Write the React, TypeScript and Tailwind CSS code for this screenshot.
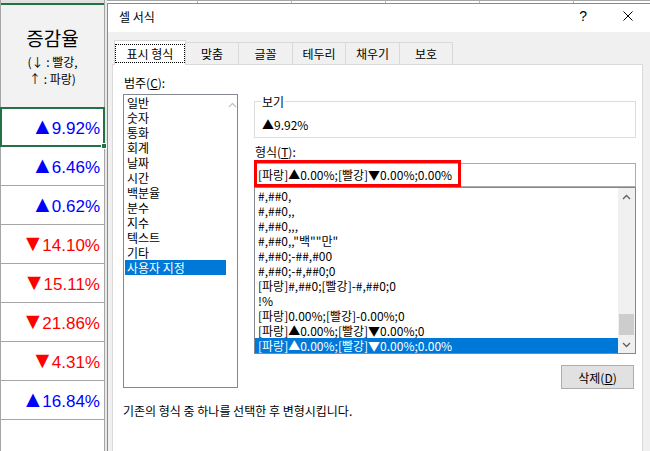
import React from 'react';

// 셀 값 (사용자 지정 서식 적용 결과)
const cells = [
  { n: '9.92%', up: true },
  { n: '6.46%', up: true },
  { n: '0.62%', up: true },
  { n: '14.10%', up: false },
  { n: '15.11%', up: false },
  { n: '21.86%', up: false },
  { n: '4.31%', up: false },
  { n: '16.84%', up: true },
];

const categories = ['일반', '숫자', '통화', '회계', '날짜', '시간', '백분율', '분수', '지수', '텍스트', '기타', '사용자 지정'];

const formats = [
  '#,##0,',
  '#,##0,,',
  '#,##0,,,',
  '#,##0,,"백""만"',
  '#,##0;-##,#00',
  '#,##0;-#,##0;0',
  '[파랑]#,##0;[빨강]-#,##0;0',
  '!%',
  '[파랑]0.00%;[빨강]-0.00%;0',
  '[파랑]▲0.00%;[빨강]▼0.00%;0',
  '[파랑]▲0.00%;[빨강]▼0.00%;0.00%',
];

const tabs = [
  { label: '맞춤', w: 'w-[54px]' },
  { label: '글꼴', w: 'w-[55px]' },
  { label: '테두리', w: 'w-[54px]' },
  { label: '채우기', w: 'w-[55px]' },
  { label: '보호', w: 'w-[54px]' },
];

function Chevron({ up, className }: { up?: boolean; className?: string }) {
  return (
    <svg width="9" height="6" viewBox="0 0 9 6" className={className}>
      <path d={up ? 'M1 5L4.5 1.5L8 5' : 'M1 1L4.5 4.5L8 1'} fill="none" stroke="currentColor" strokeWidth="1.3" />
    </svg>
  );
}

export default function App() {
  return (
    <div className="w-[650px] h-[451px] overflow-hidden flex bg-white text-black text-[12px] font-['Noto_Sans_CJK_KR',sans-serif]">
      {/* Sheet column behind the dialog */}
      <div className="w-[107px] shrink-0 flex">
        <div className="w-[105px] flex flex-col border-l border-r border-[#a6a6a6] bg-white">
          <div className="h-[3px] shrink-0 bg-[#e1e1e1]" />
          <div className="h-[2px] shrink-0 bg-[#217346]" />
          <div className="h-[103px] shrink-0 bg-[#f2f2f2] border-b border-[#a6a6a6] flex flex-col items-center pt-[21px]">
            <div className="text-[19px] leading-[24px]">증감율</div>
            <div className="mt-[4px] leading-[16.5px]">(↓ : 빨강,</div>
            <div className="leading-[16.5px]">↑ : 파랑)</div>
          </div>
          {cells.map((c, i) => (
            <div
              key={i}
              className="relative h-[39px] shrink-0 border-b border-[#a6a6a6] flex items-center justify-end pr-[4px] text-[17px] font-['Liberation_Sans',Arial,sans-serif]"
            >
              <span className={`leading-[20px] ${c.up ? 'text-[#0000ff]' : 'text-[#ff0000]'}`}>
                <span className="inline-block text-[23px] leading-none -mr-[2px]">{c.up ? '▲' : '▼'}</span>
                {c.n}
              </span>
              {i === 0 && (
                <div className="absolute -left-px -right-px -top-px -bottom-px border-2 border-[#217346]">
                  <div className="absolute -right-[4px] -bottom-[4px] w-[6px] h-[6px] bg-[#217346] border border-white" />
                </div>
              )}
            </div>
          ))}
        </div>
        <div className="w-[2px] bg-[#e8e8e8]" />
      </div>

      {/* Dialog */}
      <div className="flex-1 min-w-0 flex flex-col">
        <div className="h-[3px] shrink-0 flex border-t border-[#a6a6a6] bg-white">
          <div className="w-[91px] border-r border-[#bdbdbd]" />
          <div className="w-[94px] border-r border-[#bdbdbd]" />
          <div className="w-[94px] border-r border-[#bdbdbd]" />
          <div className="w-[94px] border-r border-[#bdbdbd]" />
          <div className="w-[94px] border-r border-[#bdbdbd]" />
        </div>
        <div className="flex-1 flex flex-col border-l border-t border-[#8c8c8c] bg-[#f0f0f0]">
          {/* Title bar */}
          <div className="h-[28px] shrink-0 bg-white flex items-center pl-[11px] pr-[17px] pb-[4px]">
            <span className="leading-[15px]">셀 서식</span>
            <span className="ml-auto mr-[36px] text-[14px] font-['Liberation_Sans',sans-serif]">?</span>
            <svg width="10" height="10" viewBox="0 0 10 10">
              <path d="M0.5 0.5L9.5 9.5M9.5 0.5L0.5 9.5" stroke="#000" strokeWidth="1" />
            </svg>
          </div>

          {/* Body */}
          <div className="flex-1 flex flex-col pl-[4px] pr-[7px] pt-[8px]">
            {/* Tabs */}
            <div className="h-[24px] shrink-0 flex items-end pl-[2px]">
              <div className="relative z-10 w-[72px] h-[25px] -mb-px bg-white border-x border-t border-[#d9d9d9] pt-[3px] pb-[2px] flex">
                <div className="flex-1 border border-dotted border-black flex items-center justify-center leading-[15px]">
                  표시 형식
                </div>
              </div>
              {tabs.map((t) => (
                <div
                  key={t.label}
                  className={`${t.w} h-[22px] -ml-px border-x border-t border-[#d9d9d9] flex items-center justify-center leading-[15px]`}
                >
                  {t.label}
                </div>
              ))}
            </div>

            {/* Tab panel */}
            <div className="h-[400px] shrink-0 bg-white border border-[#d9d9d9] pl-[10px] pt-[10px] flex flex-col">
              <div className="flex">
                {/* Category */}
                <div className="w-[115px] flex flex-col">
                  <div className="h-[15px] leading-[15px] pl-[1px]">
                    범주(<span className="underline">C</span>):
                  </div>
                  <div className="mt-[4px] h-[294px] border border-[#828790] bg-white flex">
                    <div className="w-[102px] pl-[1px]">
                      {categories.map((c, i) => (
                        <div
                          key={c}
                          className={`h-[15px] leading-[15px] pl-[2px] whitespace-nowrap ${
                            i === categories.length - 1 ? 'bg-[#0078d7] text-white' : ''
                          }`}
                        >
                          {c}
                        </div>
                      ))}
                    </div>
                    <div className="flex-1 flex justify-end pt-[7px] text-[#c4c4c4]">
                      <Chevron up />
                    </div>
                  </div>
                </div>

                {/* Right side */}
                <div className="ml-[16px] w-[382px] flex flex-col">
                  <fieldset className="mt-[19px] border border-[#dcdcdc] px-[6px] pt-[8px] pb-[5px]">
                    <legend className="px-[1px] leading-[15px]">보기</legend>
                    <div className="leading-[15px] pl-[1px]">▲9.92%</div>
                  </fieldset>

                  <div className="mt-[6px] h-[15px] leading-[15px] pl-[1px]">
                    형식(<span className="underline">T</span>):
                  </div>
                  <div className="relative mt-[4px] h-[24px] border border-[#ababab] bg-white pl-[3px] flex items-center whitespace-nowrap">
                    [파랑]▲0.00%;[빨강]▼0.00%;0.00%
                    <div className="absolute -left-px -top-[4px] w-[207px] h-[27px] border-[3px] border-[#ff0000]" />
                  </div>

                  <div className="h-[167px] border border-[#828790] bg-white flex">
                    <div className="w-[363px]">
                      {formats.map((f, i) => (
                        <div
                          key={f}
                          className={`h-[15px] leading-[15px] pl-[3px] whitespace-nowrap ${
                            i === formats.length - 1 ? 'bg-[#0078d7] text-white' : ''
                          }`}
                        >
                          {f}
                        </div>
                      ))}
                    </div>
                    <div className="flex-1 bg-[#f0f0f0] flex flex-col text-[#606060]">
                      <div className="h-[17px] flex items-center justify-center">
                        <Chevron up />
                      </div>
                      <div className="h-[109px]" />
                      <div className="h-[21px] mx-[1px] bg-[#cdcdcd]" />
                      <div className="flex-1" />
                      <div className="h-[17px] flex items-center justify-center">
                        <Chevron />
                      </div>
                    </div>
                  </div>

                  <div className="mt-[11px] self-end mr-[2px] w-[73px] h-[24px] bg-[#e1e1e1] border border-[#adadad] flex items-center justify-center leading-[15px]">
                    삭제(<span className="underline">D</span>)
                  </div>
                </div>
              </div>

              <div className="mt-[14px] leading-[15px]">기존의 형식 중 하나를 선택한 후 변형시킵니다.</div>
            </div>
          </div>
        </div>
      </div>
    </div>
  );
}
